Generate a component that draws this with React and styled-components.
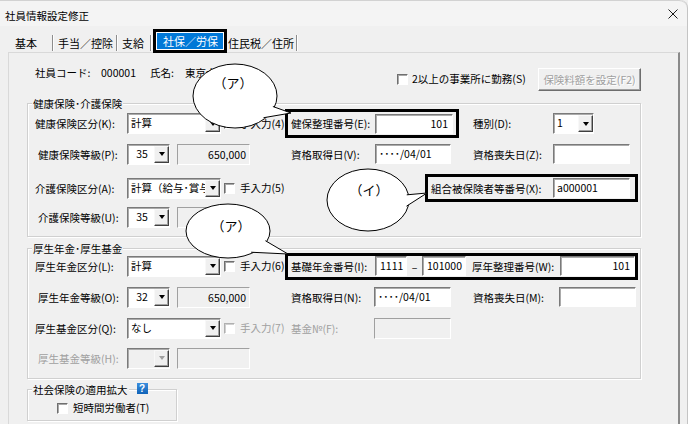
import React from 'react';
import styled, { createGlobalStyle, css } from 'styled-components';

const GlobalStyle = createGlobalStyle`
  html, body {
    margin: 0;
    padding: 0;
    background: #f0f0f0;
  }
  body {
    font-family: "Noto Sans CJK JP", "Noto Sans", sans-serif;
    font-size: 10.5px;
    color: #000;
  }
`;

const sunken = css`
  box-sizing: border-box;
  border: 1px solid;
  border-color: #7a7a7a #fff #fff #7a7a7a;
  box-shadow: inset 1px 1px 0 #ababab;
`;

const Window = styled.div`
  position: relative;
  width: 687px;
  height: 424px;
  overflow: hidden;
  background: #f0f0f0;
  border-right: 1px solid #c4c4c4;
  border-top-right-radius: 8px;
  display: flex;
  flex-direction: column;
`;

const TitleBar = styled.div`
  box-sizing: border-box;
  flex-shrink: 0;
  height: 26px;
  padding: 0 9px 0 5px;
  border-top: 1px solid #d2d2d2;
  border-top-right-radius: 8px;
  background: #f4f4f4;
  display: flex;
  align-items: center;
  justify-content: space-between;
`;

const Title = styled.span`
  margin-top: 3px;
`;

const TabStrip = styled.div`
  position: relative;
  z-index: 1;
  flex-shrink: 0;
  display: flex;
  align-items: flex-end;
  height: 24px;
  margin-top: 3px;
  padding-left: 8px;
`;

const Tab = styled.div`
  box-sizing: border-box;
  width: ${(p) => p.$w}px;
  height: 16px;
  margin: 0 0 2px ${(p) => p.$ml || 0}px;
  padding-left: ${(p) => p.$pl}px;
  border-right: 1px solid #8d8d8d;
  box-shadow: 1px 0 0 #fdfdfd;
  font-size: 11px;
  line-height: 16px;
  white-space: nowrap;
`;

const ActiveTab = styled.div`
  box-sizing: border-box;
  width: 74px;
  height: 24px;
  margin-left: 2px;
  padding: 1px;
  border: 3px solid #000;
  background: #fff;
`;

const ActiveFace = styled.div`
  height: 100%;
  padding-left: 6px;
  background: #0078d7;
  color: #fff;
  font-size: 11px;
  line-height: 16px;
  white-space: nowrap;
`;

const Panel = styled.div`
  box-sizing: border-box;
  flex: 1;
  width: 672px;
  margin: -1px 0 0 8px;
  padding: 10px 37px 0 18px;
  border-top: 1px solid #d9d9d9;
  border-left: 1px solid #d9d9d9;
  border-right: 2px solid #8a8a8a;
`;

const HeaderRow = styled.div`
  display: flex;
  align-items: flex-start;
  height: 28px;
`;

const Info = styled.span`
  flex-shrink: 0;
  width: ${(p) => (p.$w ? `${p.$w}px` : 'auto')};
  margin-left: ${(p) => p.$ml || 0}px;
  line-height: 20px;
  white-space: nowrap;
`;

const HeaderCheck = styled.div`
  margin-left: auto;
`;

const Button = styled.div`
  box-sizing: border-box;
  flex-shrink: 0;
  width: 103px;
  height: 23px;
  margin-top: 5px;
  border: 1px solid;
  border-color: #fff #6d6d6d #6d6d6d #fff;
  box-shadow: inset -1px -1px 0 #a0a0a0;
  color: #a0a0a0;
  text-shadow: 1px 1px 0 #fff;
  display: flex;
  align-items: center;
  justify-content: center;
  white-space: nowrap;
`;

const Group = styled.div`
  position: relative;
  box-sizing: border-box;
  width: ${(p) => p.$w || 614}px;
  margin-top: ${(p) => p.$mt}px;
  padding: ${(p) => p.$pad};
  border: 1px solid #d0d0d0;
  box-shadow: inset 1px 1px 0 #fff, 1px 1px 0 #fff;
`;

const Legend = styled.div`
  position: absolute;
  top: -8px;
  left: 4px;
  display: flex;
  align-items: center;
  line-height: 15px;
  white-space: nowrap;
`;

const LegendText = styled.span`
  padding: 0 1px;
  background: #f0f0f0;
`;

const HelpIcon = styled.span`
  width: 11px;
  height: 11px;
  margin: -3px 0 0 8px;
  background: linear-gradient(#3b8ede, #0f63b8);
  color: #fff;
  font-family: "Liberation Sans", Arial, sans-serif;
  font-weight: bold;
  font-size: 10px;
  line-height: 11px;
  text-align: center;
`;

const Row = styled.div`
  display: flex;
  align-items: center;
  height: ${(p) => p.$h || 28}px;
  margin-top: ${(p) => p.$mt || 0}px;
`;

const Label = styled.span`
  box-sizing: border-box;
  flex-shrink: 0;
  width: ${(p) => p.$w}px;
  margin-left: ${(p) => p.$ml || 0}px;
  padding-left: ${(p) => p.$pl || 0}px;
  color: ${(p) => (p.$disabled ? '#a0a0a0' : '#000')};
  white-space: nowrap;
`;

const Combo = styled.div`
  ${sunken}
  flex-shrink: 0;
  display: flex;
  width: ${(p) => p.$w}px;
  height: 21px;
  background: ${(p) => (p.$disabled ? '#f0f0f0' : '#fff')};
`;

const ComboValue = styled.span`
  flex: 1;
  overflow: hidden;
  padding-left: ${(p) => (p.$center ? 2 : 3)}px;
  text-align: ${(p) => (p.$center ? 'center' : 'left')};
  line-height: 17px;
  white-space: nowrap;
`;

const DropButton = styled.span`
  box-sizing: border-box;
  flex-shrink: 0;
  width: 15px;
  margin: 1px 0;
  border: 1px solid;
  border-color: #f8f8f8 #404040 #404040 #f8f8f8;
  box-shadow: inset -1px -1px 0 #a0a0a0;
  background: #f0f0f0;
  display: flex;
  align-items: center;
  justify-content: center;

  &::after {
    content: '';
    border-left: 3.5px solid transparent;
    border-right: 3.5px solid transparent;
    border-top: 4px solid ${(p) => (p.$disabled ? '#a0a0a0' : '#000')};
  }
`;

const Field = styled.div`
  box-sizing: border-box;
  flex-shrink: 0;
  width: ${(p) => p.$w}px;
  height: 21px;
  margin-left: ${(p) => p.$ml || 0}px;
  padding-right: 3px;
  border: 1px solid;
  border-color: #a0a0a0 #fff #fff #a0a0a0;
  background: #f0f0f0;
  text-align: right;
  line-height: 19px;
`;

const Input = styled.div`
  ${sunken}
  flex-shrink: 0;
  width: ${(p) => p.$w}px;
  height: 20px;
  margin-left: ${(p) => p.$ml || 0}px;
  padding: 0 ${(p) => (p.$align === 'right' ? 4 : 3)}px;
  background: #fff;
  text-align: ${(p) => p.$align || 'left'};
  line-height: 17px;
  white-space: nowrap;
  overflow: hidden;
`;

const Dash = styled.span`
  flex-shrink: 0;
  width: 15px;
  text-align: center;
`;

const Check = styled.label`
  flex-shrink: 0;
  display: flex;
  align-items: center;
  gap: ${(p) => p.$gap || 5}px;
  width: ${(p) => (p.$w ? `${p.$w}px` : 'auto')};
  margin-left: ${(p) => p.$ml || 0}px;
  margin-top: ${(p) => p.$mt || 0}px;
  color: ${(p) => (p.$disabled ? '#a0a0a0' : '#000')};
  line-height: 16px;
  white-space: nowrap;
`;

const Box = styled.span`
  box-sizing: border-box;
  flex-shrink: 0;
  width: 11px;
  height: 11px;
  border: 1px solid;
  border-color: ${(p) => (p.$disabled ? '#b0b0b0 #fff #fff #b0b0b0' : '#6f6f6f #fff #fff #6f6f6f')};
  box-shadow: inset 1px 1px 0 ${(p) => (p.$disabled ? '#d0d0d0' : '#a8a8a8')};
  background: #fff;
`;

const Highlight = styled.div`
  box-sizing: border-box;
  flex-shrink: 0;
  display: flex;
  align-items: center;
  height: ${(p) => p.$h}px;
  margin-left: ${(p) => p.$ml || 0}px;
  padding-right: ${(p) => p.$pr || 0}px;
  border: 3px solid #000;
`;

const Bubble = styled.svg`
  position: absolute;
  left: ${(p) => p.$x}px;
  top: ${(p) => p.$y}px;
  overflow: visible;
  pointer-events: none;
`;

const BubbleText = styled.text`
  font-family: "Noto Sans CJK JP", sans-serif;
  font-size: 13px;
  fill: #000;
`;

function Callout({ cx, cy, rx, ry, a1, a2, tip, text, tx, ty }) {
  const x0 = cx - rx - 2;
  const y0 = cy - ry - 2;
  const pt = (a) => {
    const r = (a * Math.PI) / 180;
    return [cx + rx * 0.96 * Math.cos(r) - x0, cy + ry * 0.96 * Math.sin(r) - y0];
  };
  const [b1x, b1y] = pt(a1);
  const [b2x, b2y] = pt(a2);
  const w = Math.max(tip[0], cx + rx) - x0 + 2;
  const h = Math.max(tip[1], cy + ry) - y0 + 2;
  return (
    <Bubble $x={x0} $y={y0} width={w} height={h}>
      <ellipse cx={cx - x0} cy={cy - y0} rx={rx} ry={ry} fill="#fff" stroke="#000" strokeWidth="1" />
      <path
        d={`M${b1x} ${b1y} L${tip[0] - x0} ${tip[1] - y0} L${b2x} ${b2y}`}
        fill="#fff"
        stroke="#000"
        strokeWidth="1"
      />
      <BubbleText x={tx - x0} y={ty - y0} textAnchor="middle" dominantBaseline="central">
        {text}
      </BubbleText>
    </Bubble>
  );
}

const CloseIcon = () => (
  <svg width="10" height="10" viewBox="0 0 10 10">
    <path d="M0.5 0.5 L9.5 9.5 M9.5 0.5 L0.5 9.5" stroke="#1a1a1a" strokeWidth="1" fill="none" />
  </svg>
);

const ComboBox = ({ w, value, center, disabled }) => (
  <Combo $w={w} $disabled={disabled}>
    <ComboValue $center={center}>{value}</ComboValue>
    <DropButton $disabled={disabled} />
  </Combo>
);

const CheckItem = ({ children, disabled, ...rest }) => (
  <Check $disabled={disabled} {...rest}>
    <Box $disabled={disabled} />
    {children}
  </Check>
);

export default function App() {
  return (
    <>
      <GlobalStyle />
      <Window>
        <TitleBar>
          <Title>社員情報設定修正</Title>
          <CloseIcon />
        </TitleBar>

        <TabStrip>
          <Tab $w={45} $pl={7}>基本</Tab>
          <Tab $w={64} $pl={5}>手当／控除</Tab>
          <Tab $w={34} $pl={5}>支給</Tab>
          <ActiveTab>
            <ActiveFace>社保／労保</ActiveFace>
          </ActiveTab>
          <Tab $w={69} $pl={0} $ml={1}>住民税／住所</Tab>
        </TabStrip>

        <Panel>
          <HeaderRow>
            <Info $w={66} $ml={8}>社員コード:</Info>
            <Info $w={49}>000001</Info>
            <Info $w={35}>氏名:</Info>
            <Info>東京太郎</Info>
            <HeaderCheck>
              <CheckItem $w={141} $gap={4} $mt={8}>
                2以上の事業所に勤務(S)
              </CheckItem>
            </HeaderCheck>
            <Button>保険料額を設定(F2)</Button>
          </HeaderRow>

          <Group $mt={12} $pad="5px 0 5px 0">
            <Legend>
              <LegendText>健康保険･介護保険</LegendText>
            </Legend>
            <Row $h={29}>
              <Label $w={99} $pl={7}>健康保険区分(K):</Label>
              <ComboBox w={94} value="計算" />
              <CheckItem $w={61} $ml={3}>手入力(4)</CheckItem>
              <Highlight $h={29} $pr={3}>
                <Label $w={87} $pl={3}>健保整理番号(E):</Label>
                <Input $w={78} $align="right">101</Input>
              </Highlight>
              <Label $w={80} $ml={14}>種別(D):</Label>
              <ComboBox w={41} value="1" />
            </Row>
            <Row $mt={2}>
              <Label $w={99} $pl={10}>健康保険等級(P):</Label>
              <ComboBox w={43} value="35" center />
              <Field $w={73} $ml={7}>650,000</Field>
              <Label $w={84} $ml={41}>資格取得日(V):</Label>
              <Input $w={76}>････/04/01</Input>
              <Label $w={80} $ml={22}>資格喪失日(Z):</Label>
              <Input $w={77} />
            </Row>
            <Row $mt={6}>
              <Label $w={99} $pl={7}>介護保険区分(A):</Label>
              <ComboBox w={94} value="計算（給与･賞与" />
              <CheckItem $w={61} $ml={3}>手入力(5)</CheckItem>
              <Highlight $h={28} $ml={140} $pr={5}>
                <Label $w={125} $pl={3}>組合被保険者等番号(X):</Label>
                <Input $w={77}>a000001</Input>
              </Highlight>
            </Row>
            <Row $mt={1}>
              <Label $w={99} $pl={10}>介護保険等級(U):</Label>
              <ComboBox w={43} value="35" center />
              <Field $w={73} $ml={7} />
            </Row>
          </Group>

          <Group $mt={11} $pad="3px 0 6px 0">
            <Legend>
              <LegendText>厚生年金･厚生基金</LegendText>
            </Legend>
            <Row>
              <Label $w={99} $pl={7}>厚生年金区分(L):</Label>
              <ComboBox w={94} value="計算" />
              <CheckItem $w={61} $ml={3}>手入力(6)</CheckItem>
              <Highlight $h={27}>
                <Label $w={87} $pl={3}>基礎年金番号(I):</Label>
                <Input $w={32} $align="right">1111</Input>
                <Dash>–</Dash>
                <Input $w={44} $align="right">101000</Input>
                <Label $w={88} $ml={6}>厚年整理番号(W):</Label>
                <Input $w={75} $align="right">101</Input>
              </Highlight>
            </Row>
            <Row $mt={3}>
              <Label $w={99} $pl={10}>厚生年金等級(O):</Label>
              <ComboBox w={43} value="32" center />
              <Field $w={73} $ml={7}>650,000</Field>
              <Label $w={83} $ml={41}>資格取得日(N):</Label>
              <Input $w={77}>････/04/01</Input>
              <Label $w={86} $ml={22}>資格喪失日(M):</Label>
              <Input $w={77} />
            </Row>
            <Row $mt={3}>
              <Label $w={99} $pl={7}>厚生基金区分(Q):</Label>
              <ComboBox w={94} value="なし" />
              <CheckItem $w={61} $ml={3} disabled>手入力(7)</CheckItem>
              <Label $w={89} $pl={6} $disabled>基金№(F):</Label>
              <Field $w={77} />
            </Row>
            <Row $mt={2}>
              <Label $w={99} $pl={10} $disabled>厚生基金等級(H):</Label>
              <ComboBox w={43} value="" center disabled />
              <Field $w={73} $ml={7} />
            </Row>
          </Group>

          <Group $w={150} $mt={10} $pad="8px 0 2px 0">
            <Legend>
              <LegendText>社会保険の適用拡大</LegendText>
              <HelpIcon>?</HelpIcon>
            </Legend>
            <Row $h={20}>
              <CheckItem $ml={29}>短時間労働者(T)</CheckItem>
            </Row>
          </Group>
        </Panel>

        <Callout cx={235} cy={96} rx={42} ry={32} a1={20} a2={45} tip={[291, 113]} text="（ア）" tx={233} ty={82} />
        <Callout cx={228} cy={231} rx={42} ry={27} a1={22} a2={55} tip={[288, 254]} text="（ア）" tx={231} ty={225} />
        <Callout cx={368} cy={200} rx={41} ry={31} a1={-10} a2={12} tip={[427, 193]} text="（イ）" tx={369} ty={189} />
      </Window>
    </>
  );
}
